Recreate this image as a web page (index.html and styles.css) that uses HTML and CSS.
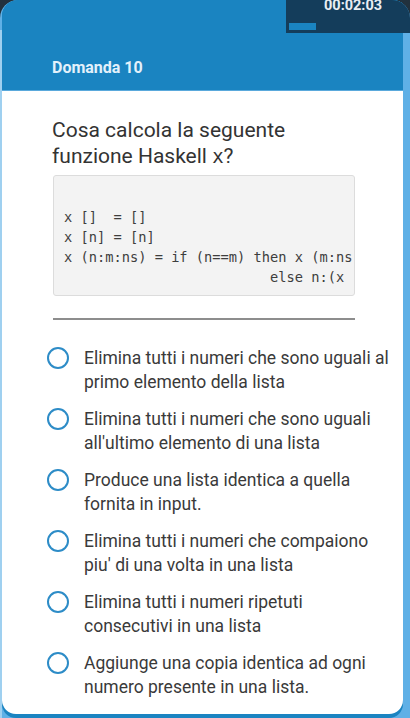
FILE: index.html
```html
<!DOCTYPE html>
<html lang="it">
<head>
<meta charset="utf-8">
<title>Domanda 10</title>
<link rel="stylesheet" href="styles.css">
</head>
<body>
<div class="device">
  <div class="app">
    <header class="header">
      <h1 class="title">Domanda 10</h1>
    </header>
    <main class="card">
      <p class="question">Cosa calcola la seguente funzione Haskell <code class="inline">x</code>?</p>
      <pre class="code">x []  = []
x [n] = [n]
x (n:m:ns) = if (n==m) then x (m:ns)
                         else n:(x (m:ns))</pre>
      <hr class="rule">
      <ul class="options">
        <li class="option"><span class="radio"></span><span class="label">Elimina tutti i numeri che sono uguali al primo elemento della lista</span></li>
        <li class="option"><span class="radio"></span><span class="label">Elimina tutti i numeri che sono uguali all'ultimo elemento di una lista</span></li>
        <li class="option"><span class="radio"></span><span class="label">Produce una lista identica a quella fornita in input.</span></li>
        <li class="option"><span class="radio"></span><span class="label">Elimina tutti i numeri che compaiono piu' di una volta in una lista</span></li>
        <li class="option"><span class="radio"></span><span class="label">Elimina tutti i numeri ripetuti consecutivi in una lista</span></li>
        <li class="option"><span class="radio"></span><span class="label">Aggiunge una copia identica ad ogni numero presente in una lista.</span></li>
      </ul>
    </main>
  </div>
  <div class="timer">
    <span class="timer-text">00:02:03</span>
    <span class="timer-bar"></span>
  </div>
</div>
</body>
</html>
```
FILE: styles.css
```css
* { box-sizing: border-box; }
html, body {
  margin: 0;
  padding: 0;
  width: 410px;
  height: 718px;
  overflow: hidden;
  background: #22313d;
  font-family: Roboto, "Liberation Sans", sans-serif;
}
.device {
  position: relative;
  width: 410px;
  height: 718px;
  background: #5fb0e6;
  border-radius: 18px 18px 0 0;
  overflow: hidden;
  padding: 0 7px 0 2px;
}
.device::before {
  content: "";
  position: absolute;
  left: 0;
  top: 30px;
  bottom: 0;
  width: 2px;
  background: #9fd0f0;
}
.app {
  height: 100%;
  display: flex;
  flex-direction: column;
  background: #1b84c1;
  border-radius: 16px 0 14px 14px;
  overflow: hidden;
}
.header {
  height: 91px;
  flex: none;
  background: #1a84c1;
  border-bottom: 1px solid #5aa9dc;
  padding: 0 0 0 50px;
  display: flex;
  align-items: flex-end;
}
.title {
  margin: 0 0 12px 0;
  font-size: 16px;
  line-height: 20px;
  font-weight: 700;
  color: #e3f1fb;
}
.card {
  flex: 1;
  background: #ffffff;
  padding: 26px 0 0 50px;
  border-radius: 0 0 14px 14px;
  margin-bottom: 4px;
}
.question {
  margin: 0;
  width: 300px;
  font-size: 21px;
  line-height: 26px;
  color: #333333;
}
.inline {
  font-family: "DejaVu Sans Mono", "Liberation Mono", monospace;
  font-size: 19px;
  line-height: 1;
}
.code {
  margin: 6px 0 0 1px;
  width: 302px;
  height: 121px;
  padding: 31px 0 0 10px;
  background: #f3f3f3;
  border: 1px solid #dcdcdc;
  border-radius: 3px;
  overflow: hidden;
  font-family: "DejaVu Sans Mono", "Liberation Mono", monospace;
  font-size: 13.7px;
  line-height: 20px;
  color: #3e3e3e;
  white-space: pre;
}
.rule {
  margin: 22px 0 0 1px;
  width: 302px;
  border: 0;
  height: 1.5px;
  background: #8d8d8d;
}
.options {
  list-style: none;
  margin: 26px 0 0 -5px;
  padding: 0;
  display: flex;
  flex-direction: column;
  gap: 13px;
}
.option {
  display: flex;
  align-items: flex-start;
  gap: 15px;
}
.radio {
  flex: none;
  width: 22px;
  height: 22px;
  margin-top: 1px;
  border: 2.5px solid #2d8cc7;
  border-radius: 50%;
}
.label {
  width: 310px;
  font-size: 17.5px;
  line-height: 24px;
  color: #3a3a3a;
}
.timer {
  position: absolute;
  top: 0;
  right: 0;
  width: 124px;
  height: 33px;
  background: #143d5b;
  border-radius: 0 16px 0 0;
}
.timer-text {
  position: absolute;
  top: -2px;
  left: 38px;
  font-size: 14.5px;
  line-height: 16px;
  font-weight: 700;
  color: #e8eef3;
}
.timer-bar {
  position: absolute;
  left: 3px;
  top: 23px;
  width: 27px;
  height: 7px;
  background: #1a84c1;
}
```
